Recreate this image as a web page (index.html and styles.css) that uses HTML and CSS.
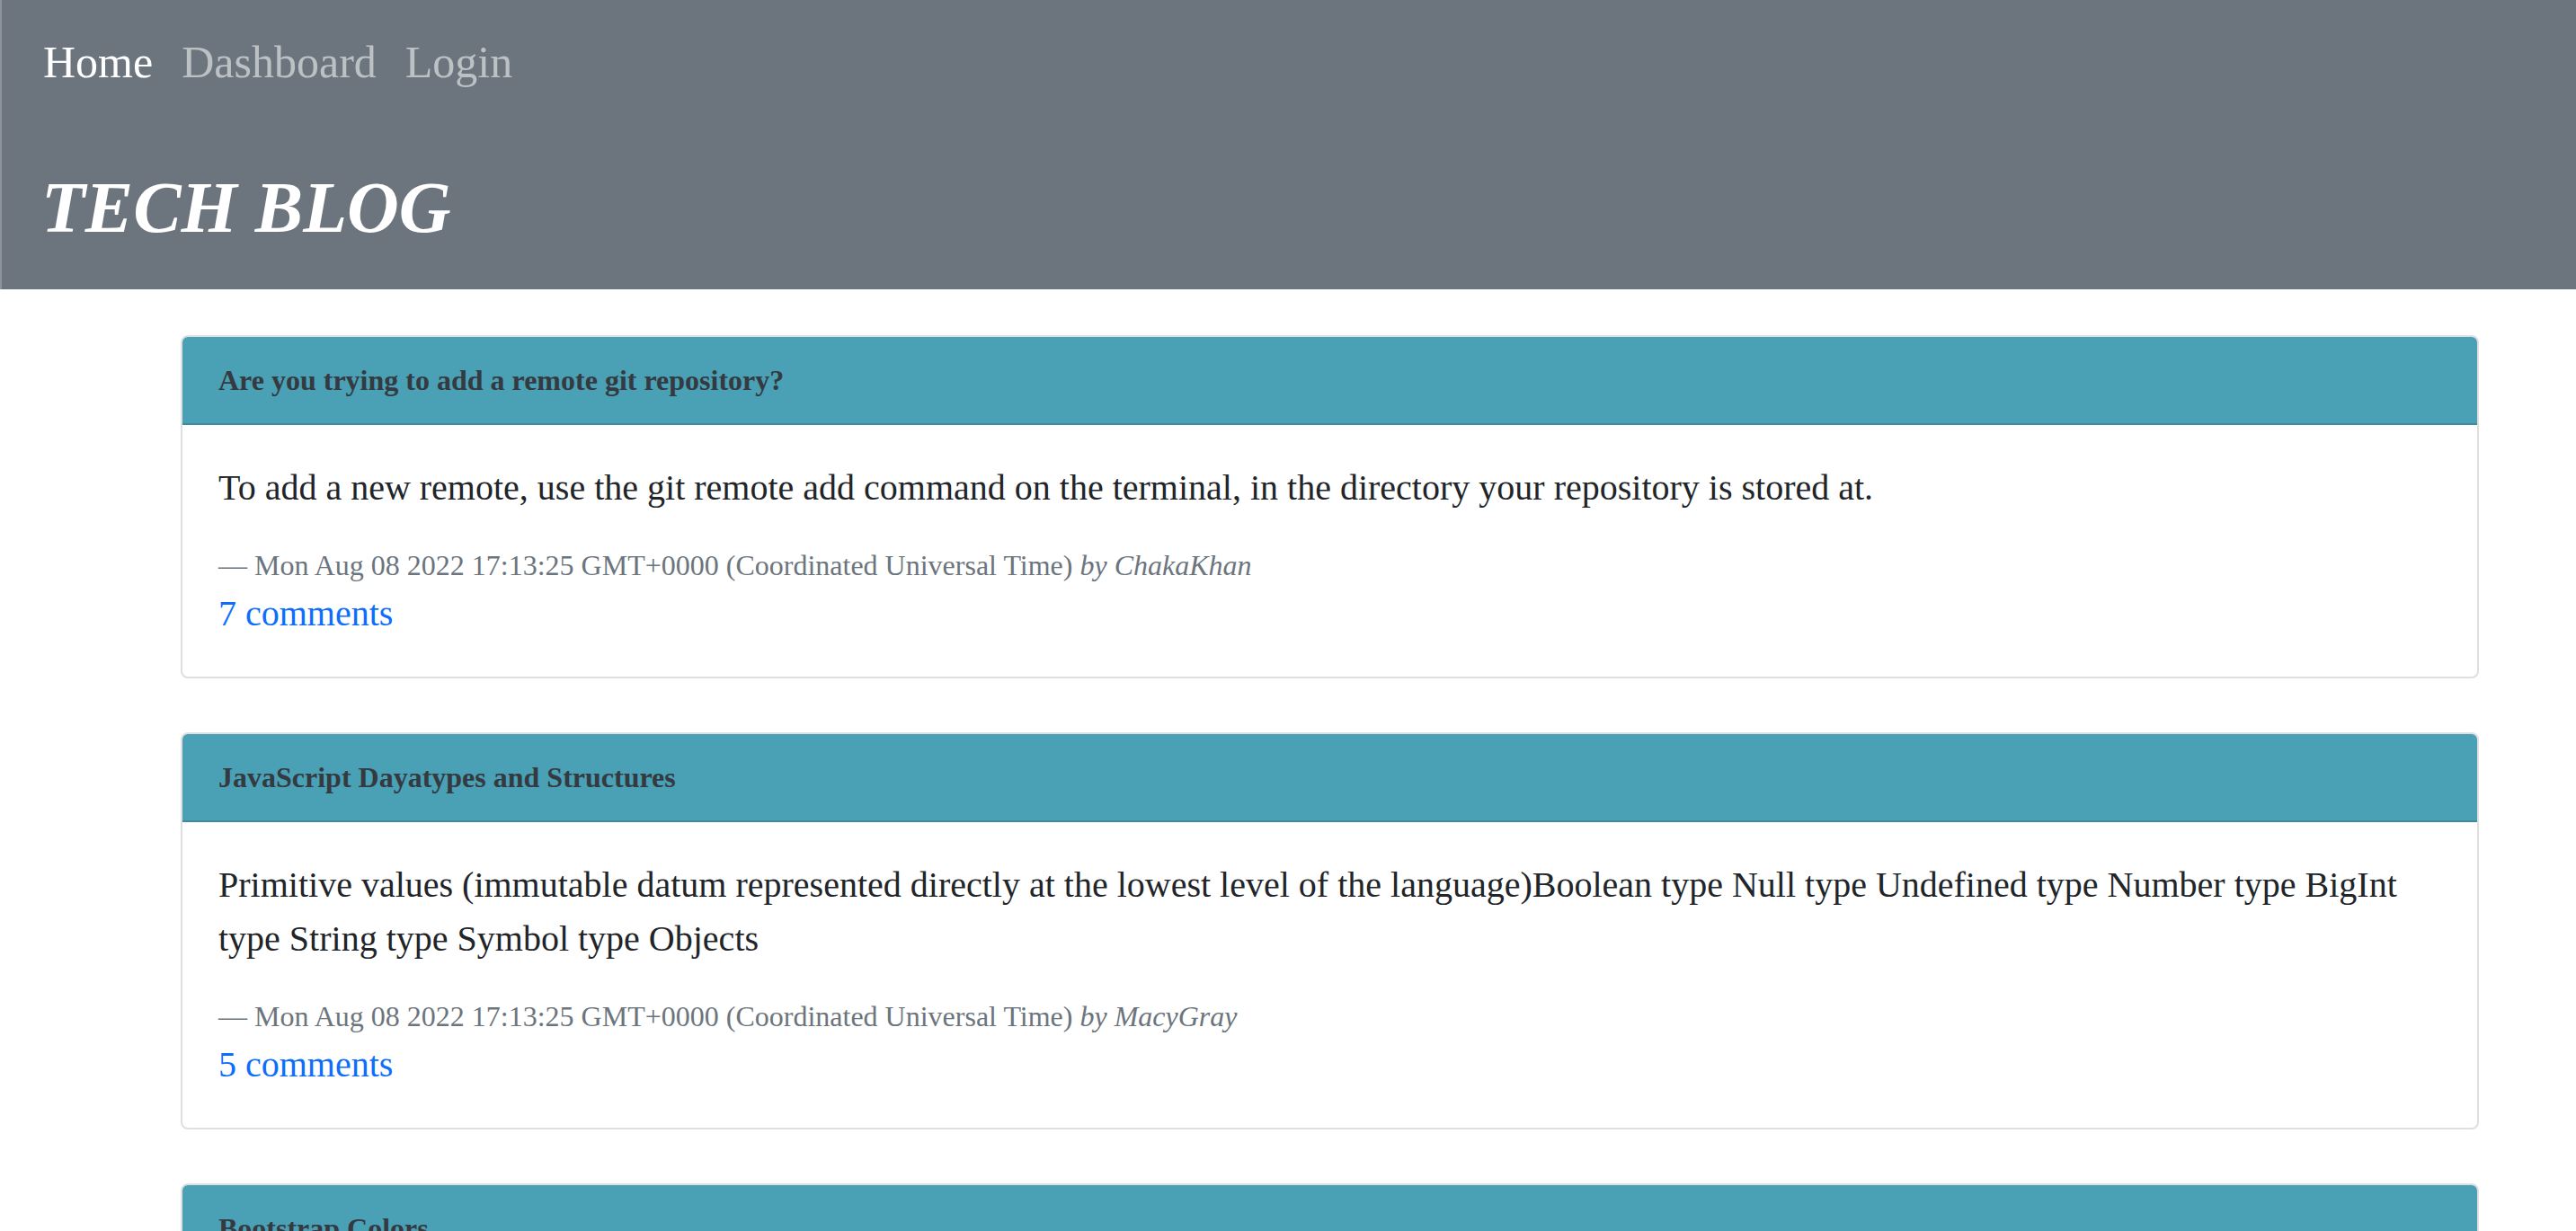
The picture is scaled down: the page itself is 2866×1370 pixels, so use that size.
FILE: index.html
```html
<!DOCTYPE html>
<html lang="en">
<head>
<meta charset="utf-8">
<title>Tech Blog</title>
<link rel="stylesheet" href="styles.css">
</head>
<body>
<header class="site-header">
  <nav class="nav">
    <a class="nav-link active" href="#">Home</a>
    <a class="nav-link" href="#">Dashboard</a>
    <a class="nav-link" href="#">Login</a>
  </nav>
  <h1 class="brand">TECH BLOG</h1>
</header>
<main class="posts">
  <article class="card">
    <div class="card-header">Are you trying to add a remote git repository?</div>
    <div class="card-body">
      <p class="post-text">To add a new remote, use the git remote add command on the terminal, in the directory your repository is stored at.</p>
      <div class="post-meta">— Mon Aug 08 2022 17:13:25 GMT+0000 (Coordinated Universal Time) <cite>by ChakaKhan</cite></div>
      <a class="post-comments" href="#">7 comments</a>
    </div>
  </article>
  <article class="card">
    <div class="card-header">JavaScript Dayatypes and Structures</div>
    <div class="card-body">
      <p class="post-text">Primitive values (immutable datum represented directly at the lowest level of the language)Boolean type Null type Undefined type Number type BigInt type String type Symbol type Objects</p>
      <div class="post-meta">— Mon Aug 08 2022 17:13:25 GMT+0000 (Coordinated Universal Time) <cite>by MacyGray</cite></div>
      <a class="post-comments" href="#">5 comments</a>
    </div>
  </article>
  <article class="card">
    <div class="card-header">Bootstrap Colors</div>
    <div class="card-body">
      <p class="post-text">Bootstrap provides contextual color classes for text and backgrounds.</p>
      <div class="post-meta">— Mon Aug 08 2022 17:13:25 GMT+0000 (Coordinated Universal Time) <cite>by ChakaKhan</cite></div>
      <a class="post-comments" href="#">3 comments</a>
    </div>
  </article>
</main>
</body>
</html>
```
FILE: styles.css
```css
* { box-sizing: border-box; }
html, body { margin: 0; padding: 0; }
body {
  font-family: "Liberation Serif", "Times New Roman", serif;
  color: #212529;
  background: #ffffff;
}
.site-header {
  background: #6c757d;
  border-left: 2px solid #8d9399;
  padding: 32px 46px 43px 44px;
}
.nav {
  display: flex;
  gap: 32px;
  margin-left: 2px;
  font-size: 50px;
  line-height: 1.5;
}
.nav-link {
  color: rgba(255, 255, 255, 0.55);
  text-decoration: none;
}
.nav-link.active { color: #ffffff; }
.brand {
  margin: 76px 0 0;
  font-size: 80px;
  line-height: 1.2;
  font-style: italic;
  font-weight: bold;
  color: #ffffff;
}
.posts {
  padding: 51px 108px 0 201px;
  display: flex;
  flex-direction: column;
  gap: 60px;
}
.card {
  border: 2px solid #dfdfdf;
  border-radius: 8px;
  overflow: hidden;
  background: #fff;
}
.card-header {
  background: #4aa0b5;
  border-bottom: 2px solid #3f8b9c;
  padding: 24px 40px;
  font-size: 32px;
  line-height: 1.5;
  font-weight: bold;
  color: #343a40;
}
.card-body {
  padding: 40px;
}
.post-text {
  margin: 0 0 32px;
  font-size: 40px;
  line-height: 1.5;
  color: #212529;
}
.post-meta {
  font-size: 32px;
  line-height: 1.5;
  color: #6c757d;
}
.post-meta cite { font-style: italic; }
.post-comments {
  display: block;
  font-size: 40px;
  line-height: 1.5;
  color: #0d6efd;
  text-decoration: none;
}
```
